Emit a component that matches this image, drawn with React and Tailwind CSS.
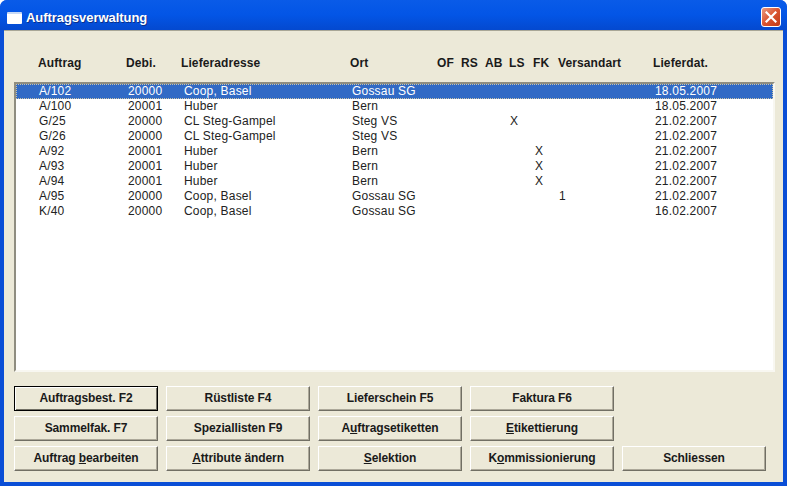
import React from 'react';

const columnGrid = 'grid grid-cols-[89px_56px_168px_86px_24px_24px_24px_25px_24px_96px_1fr]';
const headerGrid = 'grid grid-cols-[88px_55px_169px_87px_24px_24px_24px_24px_25px_95px_1fr]';

const orders = [
    ['A/102', '20000', 'Coop, Basel', 'Gossau SG', '', '', '', '', '', '', '18.05.2007'],
    ['A/100', '20001', 'Huber', 'Bern', '', '', '', '', '', '', '18.05.2007'],
    ['G/25', '20000', 'CL Steg-Gampel', 'Steg VS', '', '', '', 'X', '', '', '21.02.2007'],
    ['G/26', '20000', 'CL Steg-Gampel', 'Steg VS', '', '', '', '', '', '', '21.02.2007'],
    ['A/92', '20001', 'Huber', 'Bern', '', '', '', '', 'X', '', '21.02.2007'],
    ['A/93', '20001', 'Huber', 'Bern', '', '', '', '', 'X', '', '21.02.2007'],
    ['A/94', '20001', 'Huber', 'Bern', '', '', '', '', 'X', '', '21.02.2007'],
    ['A/95', '20000', 'Coop, Basel', 'Gossau SG', '', '', '', '', '', '1', '21.02.2007'],
    ['K/40', '20000', 'Coop, Basel', 'Gossau SG', '', '', '', '', '', '', '16.02.2007'],
];

const headers = ['Auftrag', 'Debi.', 'Lieferadresse', 'Ort', 'OF', 'RS', 'AB', 'LS', 'FK', 'Versandart', 'Lieferdat.'];

const WinButton = ({ children, isDefault }) => (
    <button
        type="button"
        className={`w-[144px] h-[25px] pb-[2px] flex items-center justify-center bg-[#ece9d8] text-[12px] font-bold tracking-[-0.1px] text-[#1a1a1a] border border-t-white border-l-white border-r-[#716f64] border-b-[#716f64] shadow-[inset_-1px_-1px_0_#aca899] ${isDefault ? 'border-black! shadow-[inset_1px_1px_0_#fff,inset_-1px_-1px_0_#716f64]' : ''}`}
    >
        <span>{children}</span>
    </button>
);

const Mnemonic = ({ children }) => <span className="underline underline-offset-1">{children}</span>;

export default function App() {
    return (
        <div className="w-[787px] h-[486px] flex flex-col overflow-hidden rounded-t-[7px] bg-[#0a4ed6] font-['Liberation_Sans',Arial,sans-serif]">
            <div className="h-[30px] shrink-0 flex items-center justify-between pl-[7px] pr-[6px] pt-[6px] bg-gradient-to-b from-[#0a5be8] via-[#0355e6] to-[#0449cf]">
                <div className="flex items-center gap-[3px]">
                    <div className="w-[15px] h-[12px] rounded-[1px] bg-white border-t-2 border-[#c7d9f5]" />
                    <span className="ml-px text-[13px] font-bold tracking-[-0.05px] text-white [text-shadow:1px_1px_0_#0a2f8a]">Auftragsverwaltung</span>
                </div>
                <div className="w-[20px] h-[20px] mb-[2px] rounded-[3px] border border-white flex items-center justify-center bg-gradient-to-br from-[#e89a80] via-[#d9532f] to-[#bf3a15]">
                    <svg width="12" height="12" viewBox="0 0 12 12">
                        <path d="M1.5 1.5 L10.5 10.5 M10.5 1.5 L1.5 10.5" stroke="#fff" strokeWidth="2.2" strokeLinecap="square" />
                    </svg>
                </div>
            </div>

            <div className="flex-1 mx-[4px] mb-[4px] flex flex-col bg-[#ece9d8] border-t border-[#a9a797] pl-[10px] pr-[11px]">
                <div className={`${headerGrid} shrink-0 h-[51px] pt-[25px] pl-[24px] text-[12px] leading-[14px] font-bold tracking-[0.1px] text-[#1a1a1a]`}>
                    {headers.map((title) => (
                        <div key={title} className="whitespace-nowrap">{title}</div>
                    ))}
                </div>

                <div className="w-[761px] h-[290px] shrink-0 bg-white border-[2px] border-t-[#8f8d80] border-l-[#8f8d80] border-r-[#f8f7f1] border-b-[#f8f7f1]">
                    {orders.map((row, i) => (
                        <div
                            key={row[0]}
                            className={`${columnGrid} h-[15px] pl-[23px] text-[12px] leading-[15px] tracking-[0.2px] ${i === 0 ? 'bg-[#316ac5] text-white outline-1 outline-dotted outline-offset-[-1px] outline-[#c9c4a8]' : 'text-[#222]'}`}
                        >
                            {row.map((value, j) => (
                                <div key={j} className="whitespace-nowrap">{value}</div>
                            ))}
                        </div>
                    ))}
                </div>

                <div className="mt-[14px] flex flex-col gap-[5px]">
                    <div className="flex gap-[8px]">
                        <WinButton isDefault>Auftragsbest. F2</WinButton>
                        <WinButton>Rüstliste F4</WinButton>
                        <WinButton>Lieferschein F5</WinButton>
                        <WinButton>Faktura F6</WinButton>
                    </div>
                    <div className="flex gap-[8px]">
                        <WinButton>Sammelfak. F7</WinButton>
                        <WinButton>Speziallisten F9</WinButton>
                        <WinButton>A<Mnemonic>u</Mnemonic>ftragsetiketten</WinButton>
                        <WinButton><Mnemonic>E</Mnemonic>tikettierung</WinButton>
                    </div>
                    <div className="flex gap-[8px]">
                        <WinButton>Auftrag <Mnemonic>b</Mnemonic>earbeiten</WinButton>
                        <WinButton><Mnemonic>A</Mnemonic>ttribute ändern</WinButton>
                        <WinButton><Mnemonic>S</Mnemonic>elektion</WinButton>
                        <WinButton>K<Mnemonic>o</Mnemonic>mmissionierung</WinButton>
                        <WinButton>Schliessen</WinButton>
                    </div>
                </div>
            </div>
        </div>
    );
}
